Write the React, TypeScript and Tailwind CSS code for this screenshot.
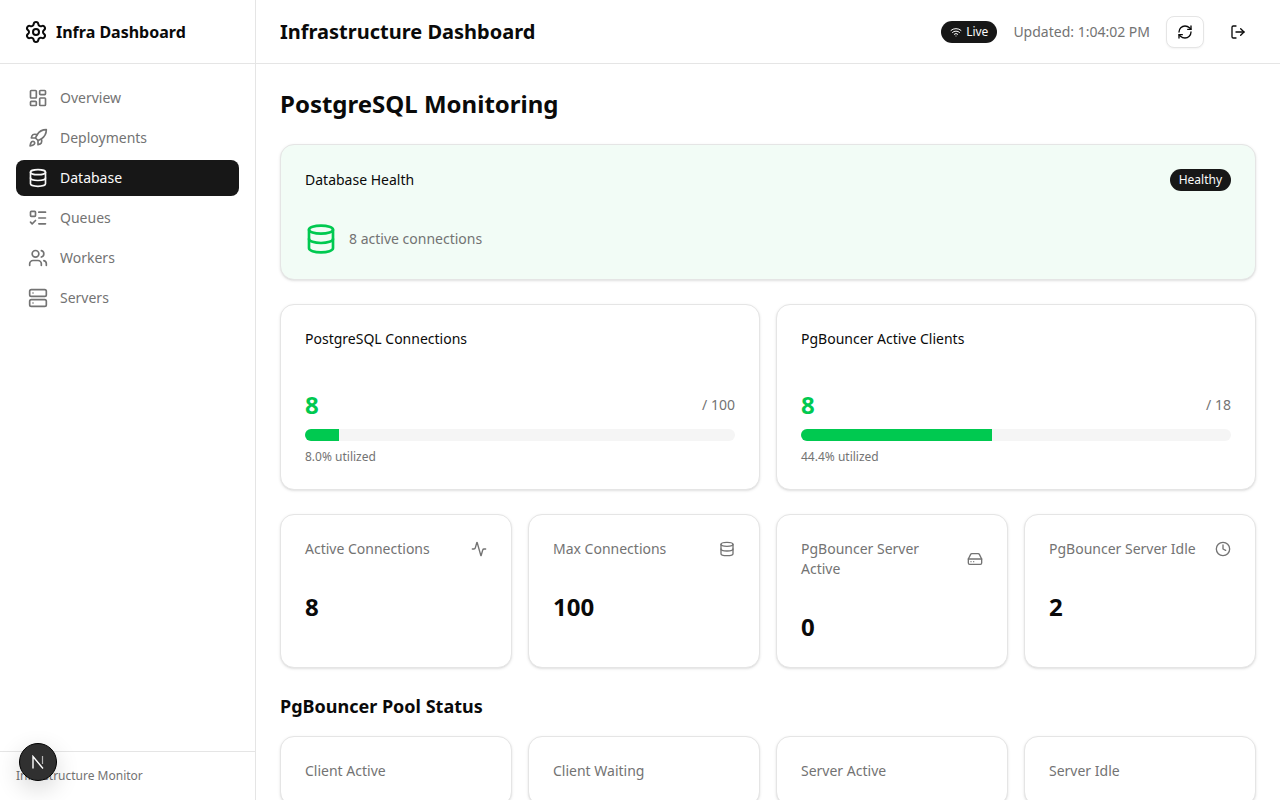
import { Activity, Clock, Database, HardDrive, LayoutDashboard, ListTodo, LogOut, RefreshCw, Rocket, Server, Settings, Users, Wifi } from "lucide-react"

const navItems = [
    { label: "Overview", icon: LayoutDashboard },
    { label: "Deployments", icon: Rocket },
    { label: "Database", icon: Database, active: true },
    { label: "Queues", icon: ListTodo },
    { label: "Workers", icon: Users },
    { label: "Servers", icon: Server },
]

const stats = [
    { label: "Active Connections", value: "8", icon: Activity },
    { label: "Max Connections", value: "100", icon: Database },
    { label: "PgBouncer Server Active", value: "0", icon: HardDrive },
    { label: "PgBouncer Server Idle", value: "2", icon: Clock },
]

const pool = ["Client Active", "Client Waiting", "Server Active", "Server Idle"]

const usage = [
    { label: "PostgreSQL Connections", value: 8, max: 100 },
    { label: "PgBouncer Active Clients", value: 8, max: 18 },
]

const Sidebar = () => (
    <aside className="flex h-screen w-64 shrink-0 flex-col border-r border-[#e5e5e5] bg-white">
        <div className="flex h-16 items-center gap-2 border-b border-[#e5e5e5] px-6">
            <Settings className="size-6 text-[#0a0a0a]" />
            <span className="text-base font-bold text-[#0a0a0a]">Infra Dashboard</span>
        </div>
        <nav className="flex flex-1 flex-col gap-1 p-4">
            {navItems.map((item) => (
                <div
                    key={item.label}
                    className={`flex h-9 items-center gap-3 rounded-lg px-3 text-sm ${item.active ? "bg-[#171717] text-[#fafafa]" : "text-[#737373]"}`}
                >
                    <item.icon className="size-5" />
                    <span>{item.label}</span>
                </div>
            ))}
        </nav>
        <div className="border-t border-[#e5e5e5] p-4 text-xs text-[#737373]">Infrastructure Monitor</div>
    </aside>
)

const Header = () => (
    <header className="flex h-16 shrink-0 items-center justify-between border-b border-[#e5e5e5] px-6">
        <h1 className="text-xl font-bold text-[#0a0a0a]">Infrastructure Dashboard</h1>
        <div className="flex items-center gap-4">
            <span className="flex h-[22px] items-center gap-1 rounded-full border border-transparent bg-[#171717] px-2 text-xs text-[#fafafa]">
                <Wifi className="size-3" />
                Live
            </span>
            <span className="text-sm text-[#737373]">Updated: 1:04:02 PM</span>
            <button className="flex h-8 w-[38px] items-center justify-center rounded-lg border border-[#e5e5e5] bg-white text-[#0a0a0a] shadow-xs">
                <RefreshCw className="size-4" />
            </button>
            <button className="flex h-8 w-9 items-center justify-center rounded-lg text-[#0a0a0a]">
                <LogOut className="size-4" />
            </button>
        </div>
    </header>
)

const Card = ({ className = "bg-white", children }: { className?: string; children: React.ReactNode }) => (
    <div className={`flex flex-col gap-6 rounded-[14px] border border-[#e5e5e5] py-6 shadow-sm ${className}`}>{children}</div>
)

const App = () => {
    return (
        <div className="flex h-screen overflow-hidden bg-white font-['Noto_Sans',sans-serif]">
            <Sidebar />
            <div className="flex min-w-0 flex-1 flex-col">
                <Header />
                <main className="flex-1 overflow-hidden p-6">
                    <h2 className="mb-6 text-2xl font-bold text-[#0a0a0a]">PostgreSQL Monitoring</h2>

                    <Card className="mb-6 bg-[#f2fcf6]">
                        <div className="flex items-center justify-between px-6">
                            <span className="text-sm text-[#0a0a0a]">Database Health</span>
                            <span className="flex h-[22px] items-center rounded-full border border-transparent bg-[#171717] px-2 text-xs text-[#fafafa]">Healthy</span>
                        </div>
                        <div className="flex items-center gap-3 px-6 pt-2">
                            <Database className="size-8 text-[#00c950]" />
                            <span className="text-sm text-[#737373]">8 active connections</span>
                        </div>
                    </Card>

                    <div className="mb-6 grid grid-cols-2 gap-4">
                        {usage.map((u) => {
                            const pct = (u.value / u.max) * 100
                            return (
                                <Card key={u.label}>
                                    <div className="px-6 text-sm text-[#0a0a0a]">{u.label}</div>
                                    <div className="flex flex-col gap-2 px-6 pt-4">
                                        <div className="flex items-center justify-between">
                                            <span className="text-2xl font-bold text-[#00c950]">{u.value}</span>
                                            <span className="text-sm text-[#737373]">/ {u.max}</span>
                                        </div>
                                        <div className="h-3 overflow-hidden rounded-full bg-[#f5f5f5]">
                                            <div className="h-full bg-[#00c950]" style={{ width: `${pct}%` }} />
                                        </div>
                                        <div className="text-xs text-[#737373]">{pct.toFixed(1)}% utilized</div>
                                    </div>
                                </Card>
                            )
                        })}
                    </div>

                    <div className="mb-6 grid grid-cols-4 gap-4">
                        {stats.map((s) => (
                            <Card key={s.label}>
                                <div className="flex items-center justify-between gap-2 px-6 text-sm text-[#737373]">
                                    <span>{s.label}</span>
                                    <s.icon className="size-4 shrink-0" />
                                </div>
                                <div className="px-6 pt-2 text-2xl font-bold text-[#0a0a0a]">{s.value}</div>
                            </Card>
                        ))}
                    </div>

                    <h3 className="mb-4 text-lg font-bold text-[#0a0a0a]">PgBouncer Pool Status</h3>
                    <div className="grid grid-cols-4 gap-4">
                        {pool.map((label) => (
                            <Card key={label}>
                                <div className="px-6 text-sm text-[#737373]">{label}</div>
                            </Card>
                        ))}
                    </div>
                </main>
            </div>

            {/* next dev indicator */}
            <div className="absolute left-[19px] top-[743px] flex size-[38px] items-center justify-center rounded-full border border-black bg-[#303030] shadow-[0_8px_24px_rgba(0,0,0,0.16)]">
                <svg width="14" height="14" viewBox="0 0 14 14" fill="none">
                    <path d="M2 13.5V1.5L12 13.5" stroke="white" strokeWidth="1.4" />
                    <path d="M11.5 1V9" stroke="#b5b5b5" strokeWidth="1.2" />
                </svg>
            </div>
        </div>
    )
}

export default App
